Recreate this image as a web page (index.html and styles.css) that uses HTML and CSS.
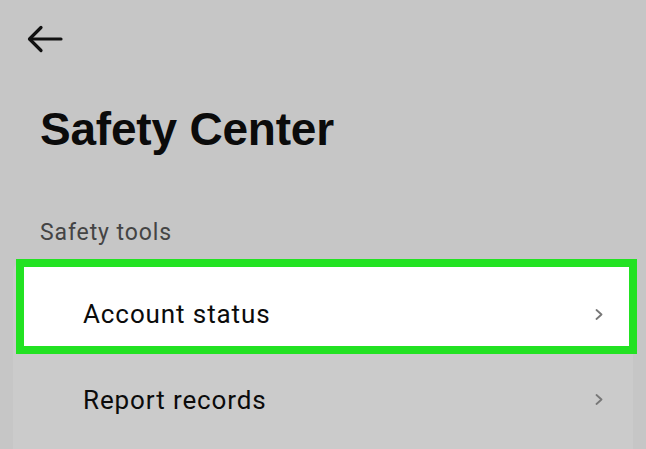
FILE: index.html
```html
<!DOCTYPE html>
<html lang="en">
<head>
    <meta charset="UTF-8">
    <meta name="viewport" content="width=device-width, initial-scale=1.0">
    <title>Safety Center</title>
    <link rel="stylesheet" href="styles.css">
</head>
<body>

<div class="tela">
    <div class="topo">
        <button class="voltar" aria-label="Back">
            <svg width="36" height="28" viewBox="0 0 36 28" fill="none" stroke="#111" stroke-width="3.2" stroke-linecap="round" stroke-linejoin="round">
                <path d="M34 14 H3"/>
                <path d="M14 2.5 L2.5 14 L14 25.5"/>
            </svg>
        </button>
    </div>

    <h1 class="titulo">Safety Center</h1>

    <div class="secao">Safety tools</div>

    <div class="cartao">
        <div class="item item-destaque">
            <span class="item-texto">Account status</span>
            <svg class="seta" width="8" height="11" viewBox="0 0 8 11" fill="none" stroke="#777" stroke-width="1.8" stroke-linecap="round" stroke-linejoin="round">
                <path d="M1.5 1 L6.5 5.5 L1.5 10"/>
            </svg>
        </div>
        <div class="item">
            <span class="item-texto">Report records</span>
            <svg class="seta" width="8" height="11" viewBox="0 0 8 11" fill="none" stroke="#777" stroke-width="1.8" stroke-linecap="round" stroke-linejoin="round">
                <path d="M1.5 1 L6.5 5.5 L1.5 10"/>
            </svg>
        </div>
    </div>
</div>

</body>
</html>
```

FILE: styles.css
```css
* {
    box-sizing: border-box;
}

html, body {
    margin: 0;
    height: 100%;
    overflow: hidden;
}

body {
    font-family: "Liberation Sans", Arial, sans-serif;
    background-color: #c6c6c6;
    color: #111;
}

.topo {
    padding: 25px 0 0 27px;
    height: 50px;
}

.voltar {
    display: block;
    padding: 0;
    border: none;
    background: none;
    cursor: pointer;
}

.voltar svg {
    display: block;
}

.titulo {
    margin: 51px 0 0 40px;
    font-size: 46px;
    line-height: 56px;
    font-weight: bold;
    letter-spacing: -0.2px;
    color: #0b0b0b;
}

.secao {
    margin: 62px 0 0 40px;
    font-family: Roboto, "Liberation Sans", sans-serif;
    font-size: 23px;
    line-height: 28px;
    color: #444;
    letter-spacing: 0.9px;
}

.cartao {
    margin: 12px 13px 0;
    padding-bottom: 40px;
    background-color: #cbcbcb;
    border-radius: 14px;
}

.item {
    display: flex;
    align-items: center;
    justify-content: space-between;
    height: 91px;
    padding: 0 30px 0 70px;
}

.item-texto {
    font-family: Roboto, "Liberation Sans", sans-serif;
    font-size: 26px;
    line-height: 30px;
    letter-spacing: 0.9px;
    color: #0b0b0b;
}

.seta {
    display: block;
}

.item-destaque {
    height: 95px;
    margin: 0 -4px 0 3px;
    padding: 24px 26px 9px 59px;
    background-color: #fff;
    border: 8px solid #22e222;
}
```
